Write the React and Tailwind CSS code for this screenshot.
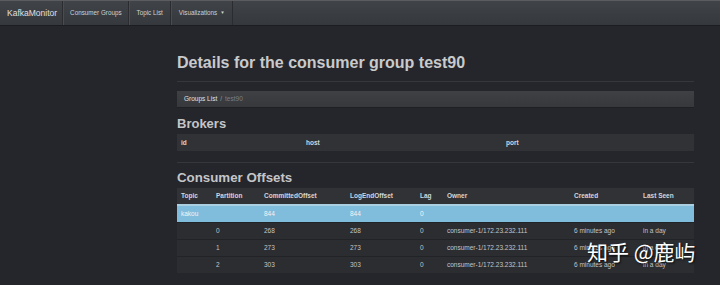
import React from "react";

const rows = [
  { topic: "kakou", part: "", c: "844", l: "844", lag: "0", owner: "", created: "", seen: "", hl: true },
  { topic: "", part: "0", c: "268", l: "268", lag: "0", owner: "consumer-1/172.23.232.111", created: "6 minutes ago", seen: "in a day" },
  { topic: "", part: "1", c: "273", l: "273", lag: "0", owner: "consumer-1/172.23.232.111", created: "6 minutes ago", seen: "in a day" },
  { topic: "", part: "2", c: "303", l: "303", lag: "0", owner: "consumer-1/172.23.232.111", created: "6 minutes ago", seen: "in a day" },
];

const cols = ["w-[35px]", "w-[48px]", "w-[86px]", "w-[70px]", "w-[27px]", "w-[127px]", "w-[69px]", "flex-1"];

export default function App() {
  return (
    <div className="relative w-[720px] h-[285px] overflow-hidden bg-[#25262b] text-[#c8c9cc]" style={{ fontFamily: '"Liberation Sans", Arial, sans-serif' }}>
      {/* navbar */}
      <div className="h-[26px] border-t border-[#5a5c60] border-b border-b-[#1c1d20] bg-gradient-to-b from-[#404348] to-[#35383c] flex items-stretch text-[6.3px] text-[#d0d1d3]">
        <div className="pl-[7px] pr-[5px] flex items-center text-[8.5px] text-[#e0e0e0] border-r border-[#2a2c30]">KafkaMonitor</div>
        <div className="px-[6px] flex items-center border-r border-[#2a2c30] border-l border-l-[#4a4c50]">Consumer Groups</div>
        <div className="px-[7px] flex items-center border-r border-[#2a2c30] border-l border-l-[#4a4c50]">Topic List</div>
        <div className="px-[7px] flex items-center gap-[3px] border-r border-[#2a2c30] border-l border-l-[#4a4c50]">Visualizations <span className="text-[4.5px]">▼</span></div>
      </div>

      <div className="ml-[177px] w-[517px]">
        <div className="pt-[26px] pb-[8px] border-b border-[#35373b]">
          <h1 className="text-[16px] leading-[21px] font-bold text-[#c9cacc]">Details for the consumer group test90</h1>
        </div>
        <div className="mt-[9px] h-[17px] bg-gradient-to-b from-[#3e4044] to-[#36383c] border-b border-[#1f2023] flex items-center pl-[7px] text-[6.5px] text-[#e2e2e2]">
          Groups List <span className="mx-[3px] text-[#9a9a9a]">/</span> <span className="text-[#7d7f83]">test90</span>
        </div>
        <h2 className="mt-[7px] text-[13px] leading-[17px] font-bold text-[#c4c5c8]">Brokers</h2>
        <div className="mt-[2px] h-[17px] bg-[#303236] flex items-center text-[6.5px] font-bold text-[#d5d6d8]">
          <div className="w-[125px] pl-[4px]">id</div>
          <div className="w-[200px] pl-[4px]">host</div>
          <div className="pl-[4px]">port</div>
        </div>
        <div className="mt-[11px] border-t border-[#35373b]" />
        <h2 className="mt-[6px] text-[13.3px] leading-[18px] font-bold text-[#c4c5c8]">Consumer Offsets</h2>
        <div className="mt-[1px] text-[6.5px]">
          <div className="h-[16px] bg-[#303236] flex items-center font-bold text-[#d5d6d8]">
            {["Topic", "Partition", "CommittedOffset", "LogEndOffset", "Lag", "Owner", "Created", "Last Seen"].map((h, i) => (
              <div key={h} className={`${cols[i]} pl-[4px]`}>{h}</div>
            ))}
          </div>
          {rows.map((r, idx) => (
            <div
              key={idx}
              className={
                r.hl
                  ? "h-[18px] bg-[#80bcdb] border-t-2 border-[#a9cfe0] flex items-center text-[#eef6fa]"
                  : "h-[17px] bg-[#2b2d31] border-t border-[#222327] flex items-center text-[#c3c4c7]"
              }
            >
              {[r.topic, r.part, r.c, r.l, r.lag, r.owner, r.created, r.seen].map((v, i) => (
                <div key={i} className={`${cols[i]} pl-[4px] whitespace-nowrap`}>{v}</div>
              ))}
            </div>
          ))}
        </div>
      </div>

      {/* watermark */}
      <div
        className="absolute left-[587px] top-[239px] text-[21px] leading-[24px] text-white whitespace-nowrap"
        style={{ fontFamily: '"Noto Sans CJK SC", sans-serif', textShadow: "1px 1px 2px rgba(0,0,0,0.8)" }}
      >
        知乎 @鹿屿
      </div>
    </div>
  );
}
